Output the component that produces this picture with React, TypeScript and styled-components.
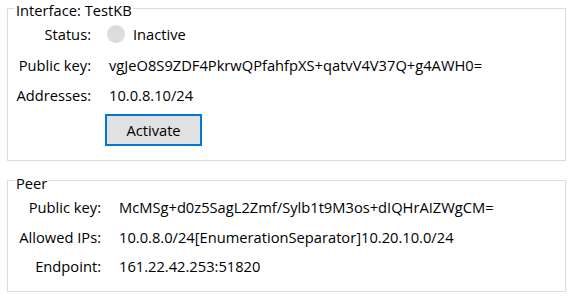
import React from "react";
import styled, { createGlobalStyle } from "styled-components";

const GlobalStyle = createGlobalStyle`
  html, body {
    margin: 0;
    background: #ffffff;
  }
  body {
    font-family: "Open Sans", "Noto Sans", sans-serif;
    font-size: 14.7px;
    color: #000000;
  }
`;

const Page = styled.div`
  width: 574px;
  height: 299px;
  padding: 0 8px 0 7px;
  box-sizing: border-box;
`;

const Group = styled.fieldset<{ $top: number; $bottom: number; $mt: number }>`
  margin: ${(p) => p.$mt}px 0 0 0;
  width: 559px;
  box-sizing: border-box;
  border: 1px solid #dcdcdc;
  padding: ${(p) => p.$top}px 8px ${(p) => p.$bottom}px 14px;
  min-width: 0;
`;

const Legend = styled.legend`
  padding: 4px 1px 0;
  margin-left: -7px;
  line-height: 12px;
`;

const Grid = styled.div<{ $label: number; $row: number }>`
  display: grid;
  grid-template-columns: ${(p) => p.$label}px 1fr;
  grid-auto-rows: ${(p) => p.$row}px;
  column-gap: 18px;
  align-items: center;
`;

const Label = styled.div`
  justify-self: end;
  white-space: nowrap;
`;

const Value = styled.div`
  white-space: nowrap;
  display: flex;
  align-items: center;
  gap: 8px;
`;

const Dot = styled.span`
  width: 18px;
  height: 18px;
  border-radius: 50%;
  background: #dcdcdc;
  margin-left: -2px;
`;

const Actions = styled.div`
  padding: 3px 0 0 83px;
`;

const Button = styled.button`
  display: block;
  width: 97px;
  height: 32px;
  box-sizing: border-box;
  border: 2px solid #0078d7;
  background: #e1e1e1;
  font-family: inherit;
  font-size: 14.7px;
  color: #000000;
  padding: 0;
`;

export default function App() {
  return (
    <Page>
      <GlobalStyle />
      <Group $top={3} $bottom={14} $mt={0}>
        <Legend>Interface: TestKB</Legend>
        <Grid $label={69} $row={30.5}>
          <Label>Status:</Label>
          <Value>
            <Dot />
            Inactive
          </Value>
          <Label>Public key:</Label>
          <Value>vgJeO8S9ZDF4PkrwQPfahfpXS+qatvV4V37Q+g4AWH0=</Value>
          <Label>Addresses:</Label>
          <Value>10.0.8.10/24</Value>
        </Grid>
        <Actions>
          <Button>Activate</Button>
        </Actions>
      </Group>
      <Group $top={4} $bottom={10} $mt={12}>
        <Legend>Peer</Legend>
        <Grid $label={79} $row={29.5}>
          <Label>Public key:</Label>
          <Value>McMSg+d0z5SagL2Zmf/Sylb1t9M3os+dIQHrAIZWgCM=</Value>
          <Label>Allowed IPs:</Label>
          <Value>10.0.8.0/24[EnumerationSeparator]10.20.10.0/24</Value>
          <Label>Endpoint:</Label>
          <Value>161.22.42.253:51820</Value>
        </Grid>
      </Group>
    </Page>
  );
}
